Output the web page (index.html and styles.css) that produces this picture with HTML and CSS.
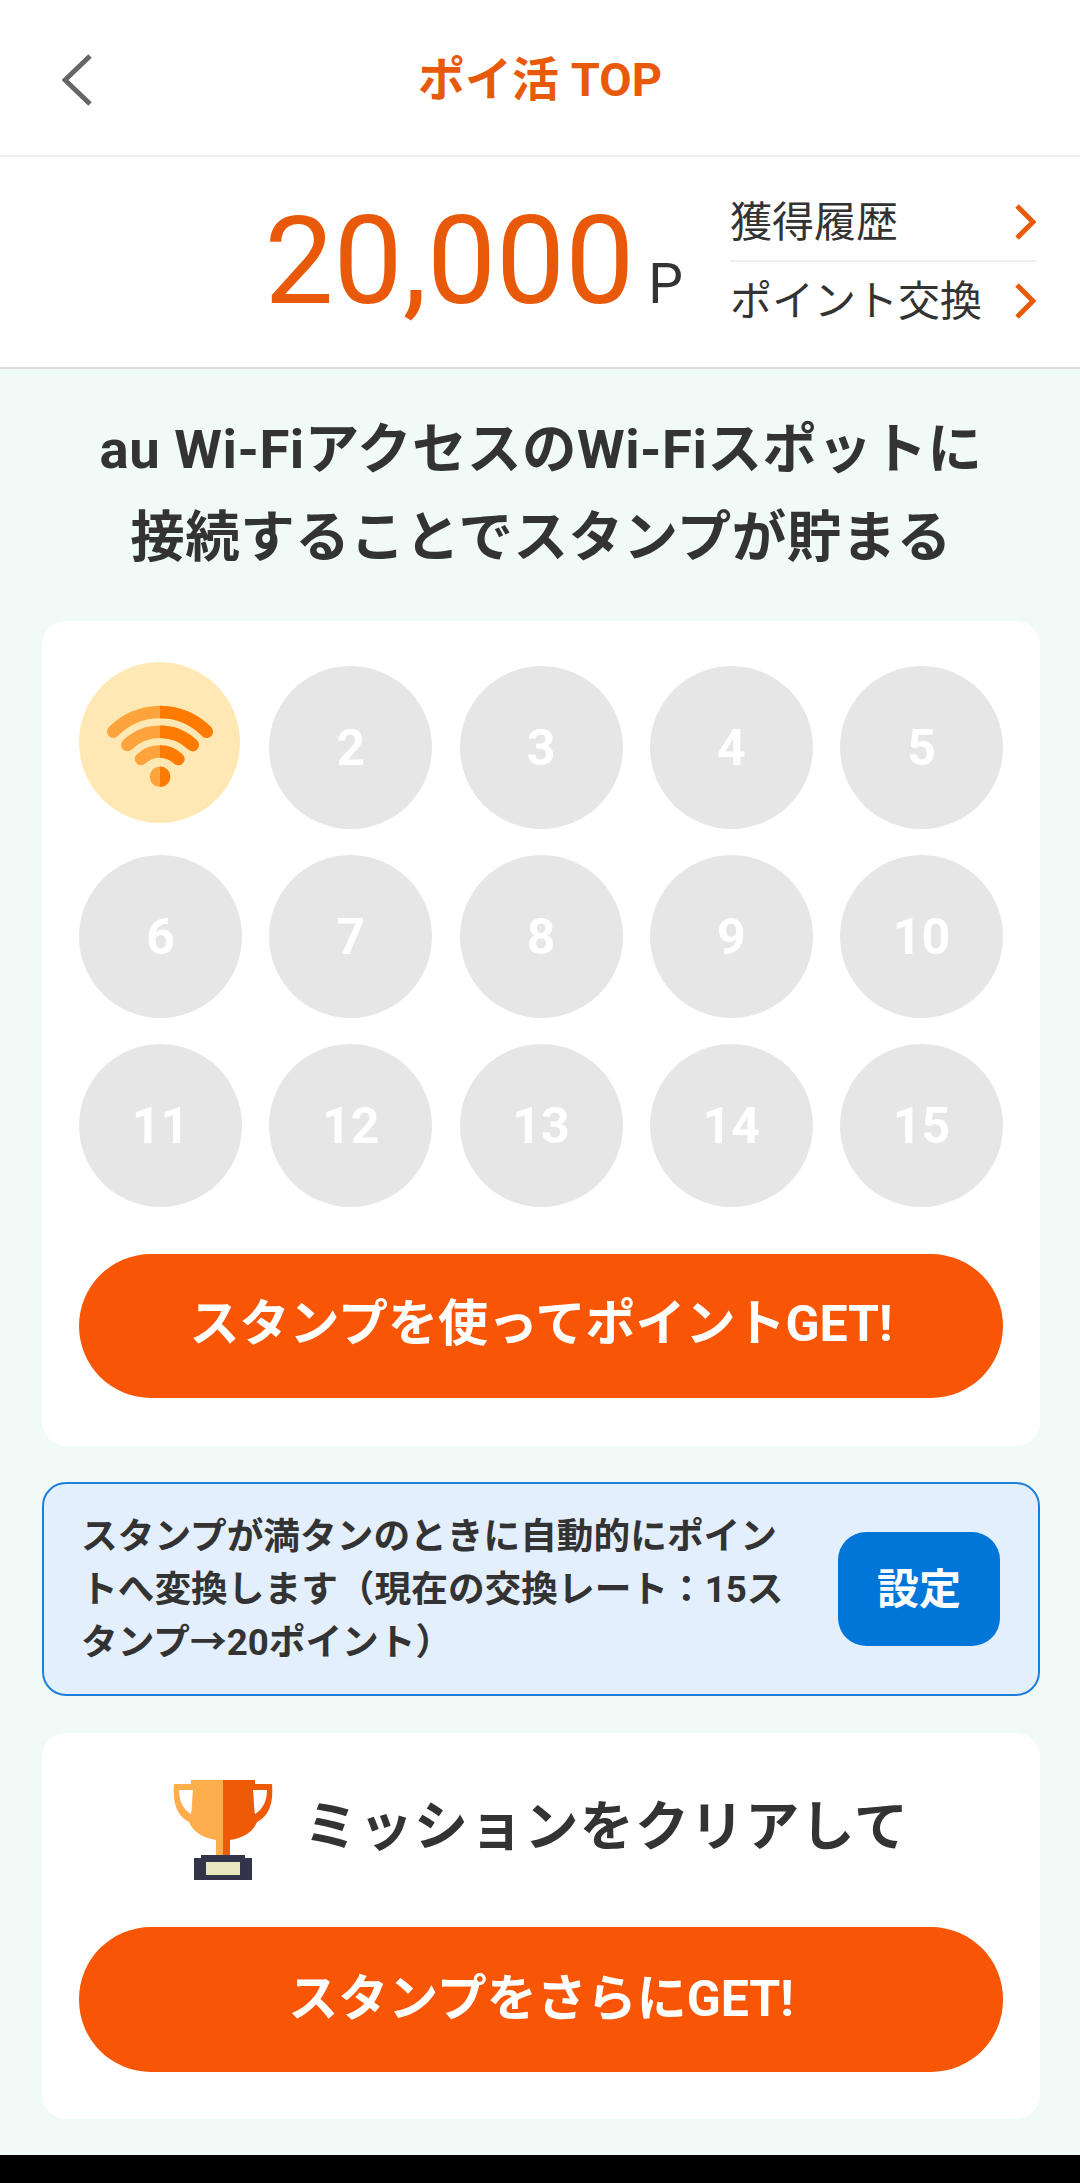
FILE: index.html
```html
<!DOCTYPE html>
<html lang="ja">
<head>
    <meta charset="UTF-8">
    <meta name="viewport" content="width=device-width, initial-scale=1.0">
    <title>ポイ活 TOP</title>
    <link rel="stylesheet" href="styles.css">
</head>
<body>
    <div class="app">
        <header class="header">
            <svg class="back" viewBox="0 0 30 52" width="30" height="52">
                <path d="M28 2 L3 26 L28 50" />
            </svg>
            <h1 class="header_title">ポイ活 TOP</h1>
        </header>

        <section class="points">
            <div class="points_value">20,000<span class="points_unit">P</span></div>
            <div class="points_links">
                <a class="points_link"><span>獲得履歴</span>
                    <svg viewBox="0 0 22 36" width="22" height="36"><path d="M3 2 L19 18 L3 34" /></svg>
                </a>
                <a class="points_link"><span>ポイント交換</span>
                    <svg viewBox="0 0 22 36" width="22" height="36"><path d="M3 2 L19 18 L3 34" /></svg>
                </a>
            </div>
        </section>

        <main class="content">
            <h2 class="lead">au Wi-FiアクセスのWi-Fiスポットに<br>接続することでスタンプが貯まる</h2>

            <section class="card">
                <div class="stamps">
                    <div class="stamp stamp-active">
                        <svg viewBox="0 0 161 161" width="161" height="161">
                            <defs>
                                <clipPath id="wifi-right"><rect x="81" y="0" width="80" height="161" /></clipPath>
                            </defs>
                            <g class="wifi_light">
                                <path d="M34.3 69.7 A65 65 0 0 1 127.7 69.7" />
                                <path d="M48.3 83 A47 47 0 0 1 113.7 83" />
                                <path d="M62 97 A27 27 0 0 1 99.3 97" />
                                <circle cx="81" cy="114.7" r="10.3" />
                            </g>
                            <g class="wifi_dark" clip-path="url(#wifi-right)">
                                <path d="M34.3 69.7 A65 65 0 0 1 127.7 69.7" />
                                <path d="M48.3 83 A47 47 0 0 1 113.7 83" />
                                <path d="M62 97 A27 27 0 0 1 99.3 97" />
                                <circle cx="81" cy="114.7" r="10.3" />
                            </g>
                        </svg>
                    </div>
                    <div class="stamp">2</div>
                    <div class="stamp">3</div>
                    <div class="stamp">4</div>
                    <div class="stamp">5</div>
                    <div class="stamp">6</div>
                    <div class="stamp">7</div>
                    <div class="stamp">8</div>
                    <div class="stamp">9</div>
                    <div class="stamp">10</div>
                    <div class="stamp">11</div>
                    <div class="stamp">12</div>
                    <div class="stamp">13</div>
                    <div class="stamp">14</div>
                    <div class="stamp">15</div>
                </div>
                <button class="btn">スタンプを使ってポイントGET!</button>
            </section>

            <section class="notice">
                <p class="notice_text">スタンプが満タンのときに自動的にポイントへ変換します（現在の交換レート：15スタンプ→20ポイント）</p>
                <button class="notice_btn">設定</button>
            </section>

            <section class="card card-mission">
                <div class="mission">
                    <svg class="trophy" viewBox="0 0 100 100" width="100" height="100">
                        <path fill="#ffae4d" d="M18 0 H50 V75 H43 V60 C30 58 20 52 16 42 C6 37 -1 26 1 4 H18 Z M6 10 C6 22 11 30 18 34 C19 30 19 20 20 10 Z" fill-rule="evenodd" />
                        <path fill="#ee5a06" d="M82 0 H50 V75 H57 V60 C70 58 80 52 84 42 C94 37 101 26 99 4 H82 Z M94 10 C94 22 89 30 82 34 C81 30 81 20 80 10 Z" fill-rule="evenodd" />
                        <path fill="#33344a" d="M28 75 H72 V78 H79 V100 H21 V78 H28 Z" />
                        <rect x="33" y="82" width="34" height="13" fill="#e8e8c0" />
                    </svg>
                    <h2 class="mission_title">ミッションをクリアして</h2>
                </div>
                <button class="btn">スタンプをさらにGET!</button>
            </section>
        </main>
    </div>
</body>
</html>
```

FILE: styles.css
```css
* {
    box-sizing: border-box;
}

body, html {
    margin: 0;
    padding: 0;
    background-color: #000000;
    font-family: Roboto, 'Noto Sans CJK JP', sans-serif;
    color: #333333;
}

.app {
    height: 2155px;
    background-color: #f0faf6;
    display: flex;
    flex-direction: column;
}

.header {
    position: relative;
    height: 157px;
    flex: none;
    background-color: #ffffff;
    border-bottom: 2px solid #eeeeee;
    padding-bottom: 4px;
    display: flex;
    justify-content: center;
    align-items: center;
}

.back {
    position: absolute;
    left: 62px;
    top: 54px;
}

.back path {
    fill: none;
    stroke: #666666;
    stroke-width: 5;
}

.header_title {
    margin: 0;
    font-size: 47px;
    font-weight: 700;
    color: #e85a0a;
}

.points {
    height: 212px;
    flex: none;
    background-color: #ffffff;
    border-bottom: 2px solid #dddddd;
    display: flex;
    justify-content: flex-end;
    align-items: center;
    padding-right: 44px;
    gap: 47px;
}

.points_value {
    font-size: 123px;
    line-height: 1;
    color: #e85a0a;
    display: flex;
    align-items: baseline;
    padding-bottom: 2px;
}

.points_unit {
    font-size: 55px;
    color: #333333;
    margin-left: 14px;
}

.points_links {
    width: 306px;
    display: flex;
    flex-direction: column;
}

.points_link {
    height: 78px;
    font-size: 42px;
    display: flex;
    justify-content: space-between;
    align-items: center;
}

.points_link span {
    margin-bottom: 8px;
}

.points_link:first-child {
    border-bottom: 2px solid #eeeeee;
}

.points_link svg {
    flex: none;
}

.points_link path {
    fill: none;
    stroke: #e85a0a;
    stroke-width: 5;
}

.content {
    padding: 36px 40px 0 42px;
}

.lead {
    margin: 0 0 40px;
    font-size: 54.5px;
    line-height: 88px;
    font-weight: 700;
    text-align: center;
    letter-spacing: 0.5px;
}

.card {
    background-color: #ffffff;
    border-radius: 24px;
    padding: 41px 37px 48px 37px;
}

.card-mission {
    padding-top: 47px;
    padding-bottom: 47px;
}

.stamps {
    display: grid;
    grid-template-columns: repeat(5, 163px);
    justify-content: space-between;
    align-items: end;
    row-gap: 26px;
    margin-bottom: 47px;
}

.stamp {
    width: 163px;
    height: 163px;
    border-radius: 50%;
    background-color: #e6e6e6;
    color: #ffffff;
    font-size: 50px;
    font-weight: 700;
    display: flex;
    justify-content: center;
    align-items: center;
}

.stamp-active {
    width: 161px;
    height: 161px;
    align-self: start;
    background-color: #ffe8b3;
    margin-bottom: 6px;
}

.wifi_light path, .wifi_dark path {
    fill: none;
    stroke-width: 12.5;
    stroke-linecap: round;
}

.wifi_light path {
    stroke: #ffa43c;
}

.wifi_light circle {
    fill: #ffa43c;
}

.wifi_dark path {
    stroke: #ff7a00;
}

.wifi_dark circle {
    fill: #ff7a00;
}

.btn {
    display: block;
    width: 100%;
    height: 144px;
    padding: 0 0 14px;
    border: none;
    border-radius: 72px;
    background-color: #f85505;
    color: #ffffff;
    font-family: inherit;
    font-size: 50px;
    font-weight: 700;
    cursor: pointer;
}

.card-mission .btn {
    height: 145px;
    padding-bottom: 12px;
}

.notice {
    margin: 36px 0 37px;
    height: 214px;
    border: 2px solid #1e7fd8;
    border-radius: 24px;
    background-color: #e4effe;
    padding: 0 38px 0 37px;
    display: flex;
    justify-content: space-between;
    align-items: center;
}

.notice_text {
    margin: 0;
    width: 722px;
    font-size: 36.7px;
    line-height: 53px;
    font-weight: 700;
}

.notice_btn {
    width: 162px;
    height: 114px;
    padding: 0 0 8px;
    border: none;
    border-radius: 28px;
    background-color: #0076d9;
    color: #ffffff;
    font-family: inherit;
    font-size: 42px;
    font-weight: 700;
    cursor: pointer;
}

.mission {
    display: flex;
    justify-content: center;
    align-items: center;
    gap: 31px;
    margin-bottom: 47px;
}

.mission_title {
    margin: 0 0 15px;
    font-size: 54px;
    font-weight: 700;
    letter-spacing: 1.2px;
}
```
